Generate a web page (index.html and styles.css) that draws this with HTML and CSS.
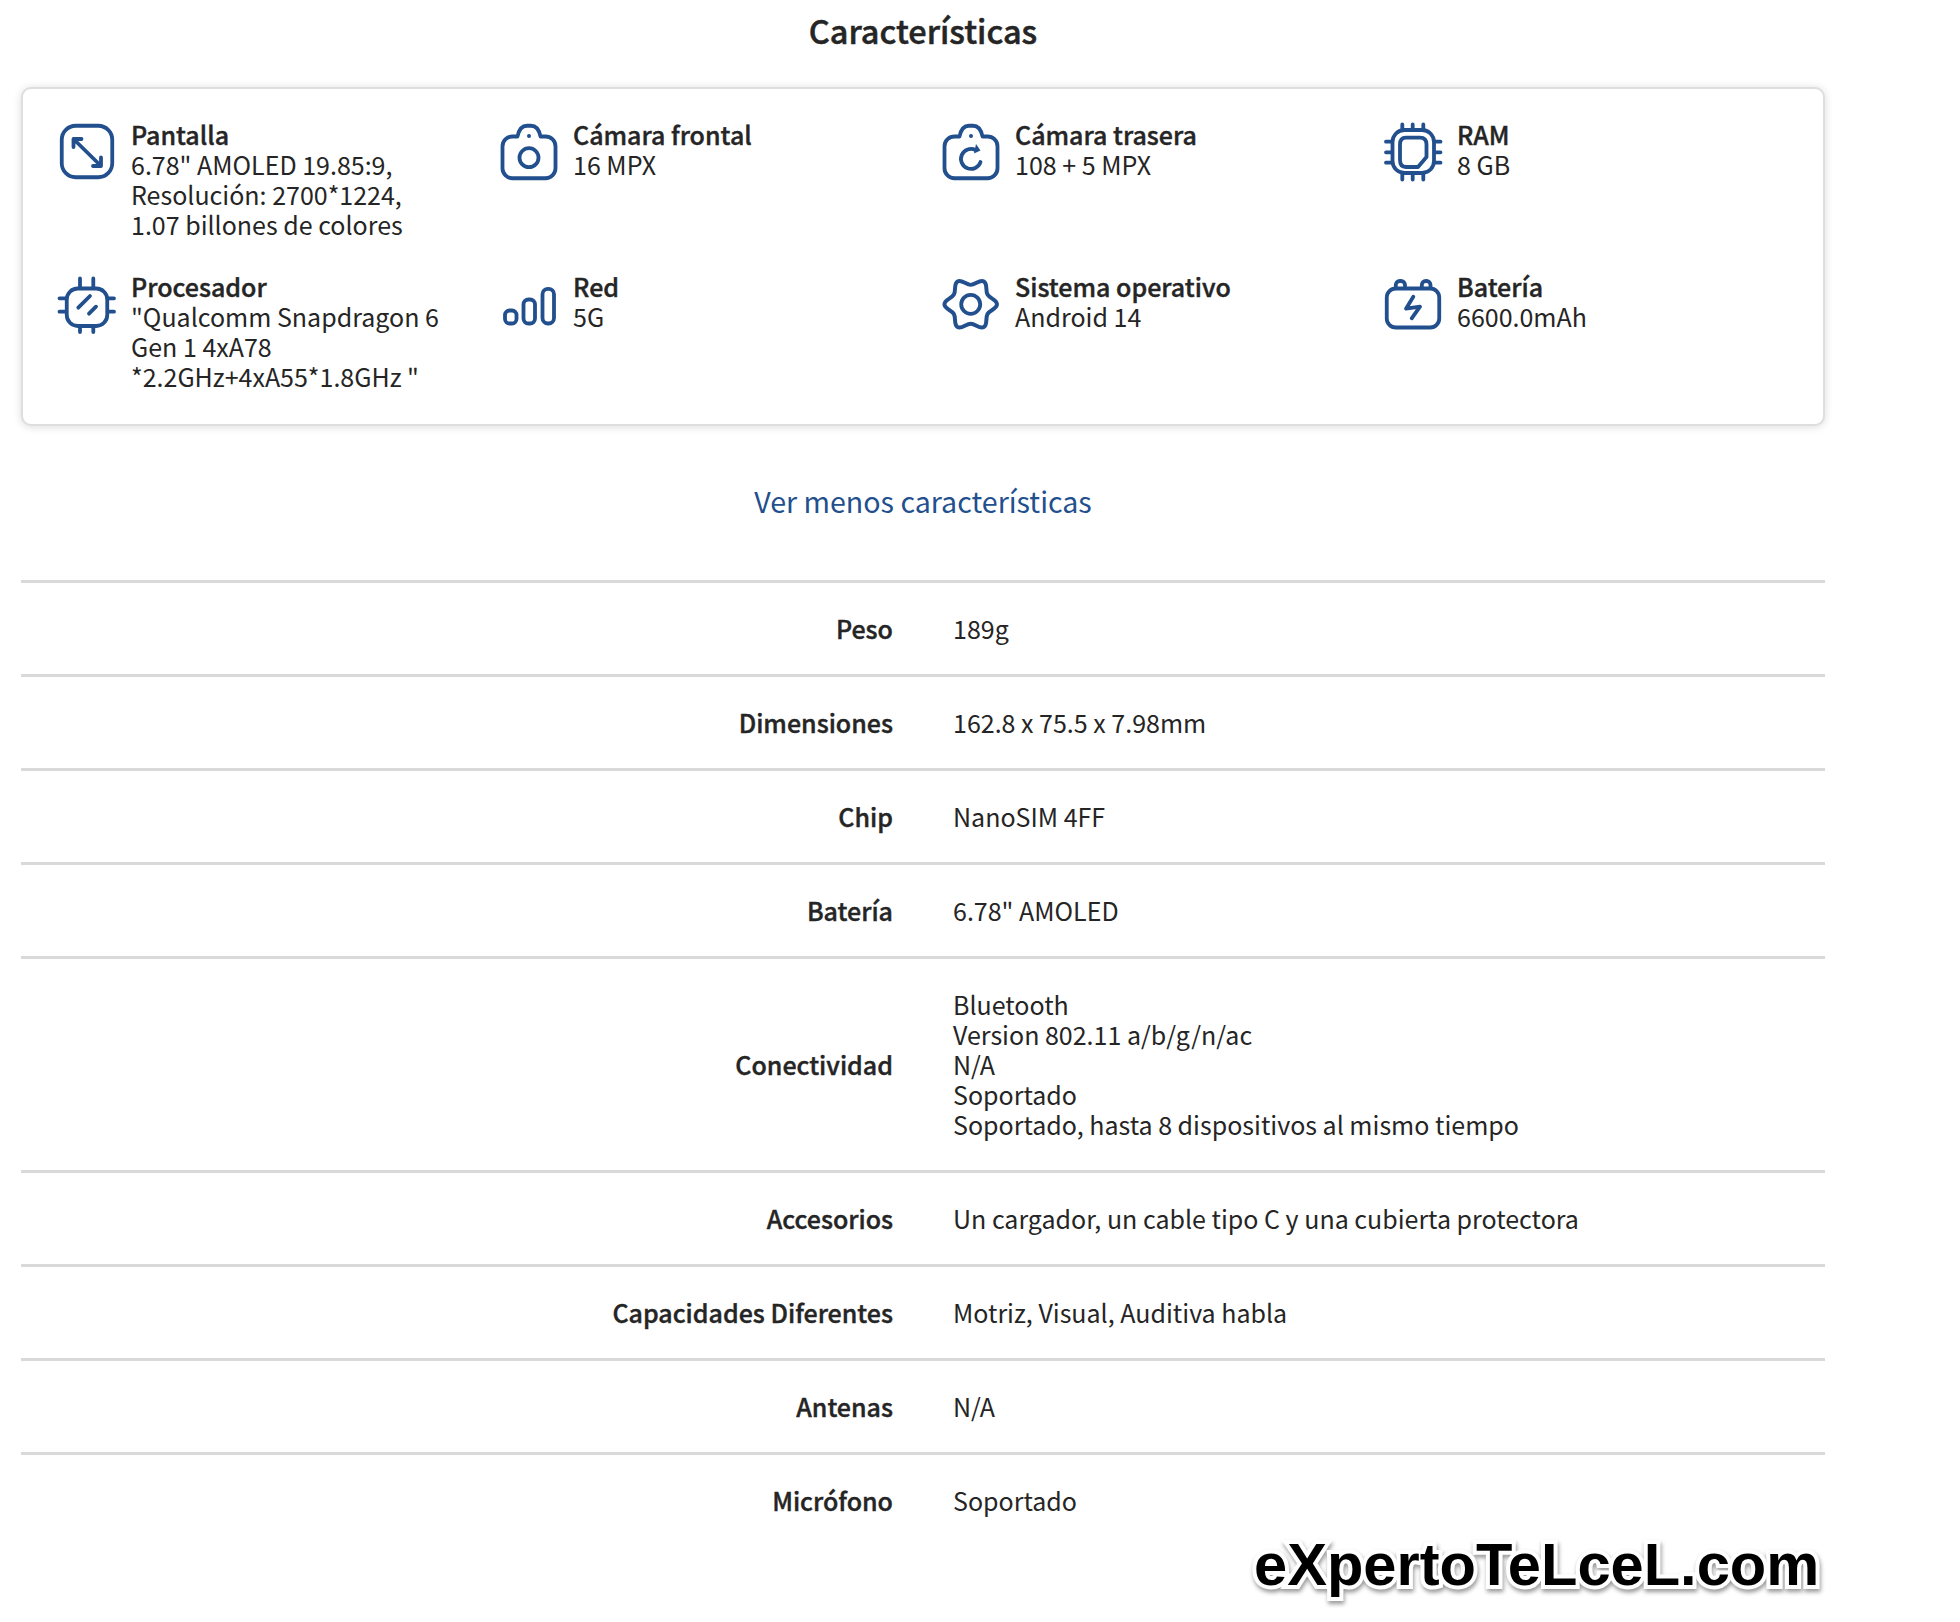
FILE: index.html
```html
<!DOCTYPE html>
<html lang="es">
<head>
<meta charset="utf-8">
<title>Características</title>
<link rel="stylesheet" href="styles.css">
</head>
<body>
<main class="page">
  <h2 class="title">Características</h2>
  <section class="card">
    <div class="feature">
      <svg class="icon" viewBox="0 0 60 60"><rect x="4.75" y="3.75" width="50.5" height="51.5" rx="14"/><path d="M16.500 17 44 44M16.500 25V17H24.500M44 35.500V44H36"/></svg>
      <div class="text"><b>Pantalla</b><span>6.78" AMOLED 19.85:9,<br>Resolución: 2700*1224,<br>1.07 billones de colores</span></div>
    </div>
    <div class="feature">
      <svg class="icon" viewBox="0 0 60 60"><path d="M18.5 14.5C20 7 24 3.75 28 3.75H32C36 3.75 40 7 41.5 14.5H46A10 10 0 0 1 56.5 24.5V46A10 10 0 0 1 46 56.25H14A10 10 0 0 1 3.5 46V24.5A10 10 0 0 1 14 14.5Z"/><circle cx="30" cy="35.7" r="9.5"/><circle class="solid" cx="30" cy="14" r="2"/></svg>
      <div class="text"><b>Cámara frontal</b><span>16 MPX</span></div>
    </div>
    <div class="feature">
      <svg class="icon" viewBox="0 0 60 60"><path d="M18.5 14.5C20 7 24 3.75 28 3.75H32C36 3.75 40 7 41.5 14.5H46A10 10 0 0 1 56.5 24.5V46A10 10 0 0 1 46 56.25H14A10 10 0 0 1 3.5 46V24.5A10 10 0 0 1 14 14.5Z"/><path d="M39.5 40A10 10 0 1 1 34.5 28"/><path class="solid" d="M35 22 39.5 28.5 33 31.5Z"/><circle class="solid" cx="30" cy="14" r="2"/></svg>
      <div class="text"><b>Cámara trasera</b><span>108 + 5 MPX</span></div>
    </div>
    <div class="feature">
      <svg class="icon" viewBox="0 0 60 60"><rect x="9.500" y="8" width="41.500" height="43" rx="12"/><path d="M23 15.700H37Q43.500 15.700 43.500 22.500V35L35 45H23Q17 45 17 38V22.500Q17 15.700 23 15.700Z"/><path d="M19.300 2.500V8M29.700 2.500V8M40.300 2.500V8M19.300 52V57.500M29.700 52V57.500M40.300 52V57.500M3 19.700H9M3 30.300H9M3 40.700H9M52 19.700H57.500M52 30.300H57.500M52 40.700H57.500"/></svg>
      <div class="text"><b>RAM</b><span>8 GB</span></div>
    </div>
    <div class="feature">
      <svg class="icon" viewBox="0 0 60 60"><rect x="9.75" y="14.5" width="40.5" height="37.500" rx="11"/><path d="M23 4.500V13M36.300 4.500V13M23 53V58M36.300 53V58M2.500 24.300H9M2.500 37.700H9M51 24.300H57M51 37.700H57M21.300 33.700 33 22M32 39.700 39 32.700"/></svg>
      <div class="text"><b>Procesador</b><span>"Qualcomm Snapdragon 6<br>Gen 1 4xA78<br>*2.2GHz+4xA55*1.8GHz "</span></div>
    </div>
    <div class="feature">
      <svg class="icon" viewBox="0 0 60 60"><rect x="6" y="36.500" width="11.500" height="13" rx="4.500"/><rect x="24.500" y="25.500" width="11.500" height="24" rx="5"/><rect x="43.500" y="14.800" width="11.500" height="34.700" rx="5.500"/></svg>
      <div class="text"><b>Red</b><span>5G</span></div>
    </div>
    <div class="feature">
      <svg class="icon" viewBox="0 0 60 60"><path transform="translate(29.700 30.300) scale(1.050)" d="M25 0C25 4.500 18.270 5.350 16.020 9.250C13.770 13.150 16.400 19.400 12.500 21.650C8.600 23.900 4.500 18.500 0 18.500C-4.500 18.500 -8.600 23.900 -12.500 21.650C-16.400 19.400 -13.770 13.150 -16.020 9.250C-18.270 5.350 -25 4.500 -25 0C-25 -4.500 -18.270 -5.350 -16.020 -9.250C-13.770 -13.150 -16.400 -19.400 -12.500 -21.650C-8.600 -23.900 -4.500 -18.500 0 -18.500C4.500 -18.500 8.600 -23.900 12.500 -21.650C16.400 -19.400 13.770 -13.150 16.020 -9.250C18.270 -5.350 25 -4.500 25 0Z"/><circle cx="29.700" cy="30.300" r="9.500"/></svg>
      <div class="text"><b>Sistema operativo</b><span>Android 14</span></div>
    </div>
    <div class="feature">
      <svg class="icon" viewBox="0 0 60 60"><rect x="3.750" y="14.500" width="52.500" height="39" rx="9"/><path d="M12.800 14V11A4 4 0 0 1 16.800 7H18A4 4 0 0 1 22 11V14M38.800 14V11A4 4 0 0 1 42.800 7H43.500A4 4 0 0 1 47.500 11V14M30.300 22.700 23 34.700 37 32.700 28.700 44.300"/></svg>
      <div class="text"><b>Batería</b><span>6600.0mAh</span></div>
    </div>
  </section>
  <a class="more" href="#">Ver menos características</a>
  <section class="specs">
    <div class="spec"><div class="label">Peso</div><div class="value">189g</div></div>
    <div class="spec"><div class="label">Dimensiones</div><div class="value">162.8 x 75.5 x 7.98mm</div></div>
    <div class="spec"><div class="label">Chip</div><div class="value">NanoSIM 4FF</div></div>
    <div class="spec"><div class="label">Batería</div><div class="value">6.78" AMOLED</div></div>
    <div class="spec"><div class="label">Conectividad</div><div class="value">Bluetooth<br>Version 802.11 a/b/g/n/ac<br>N/A<br>Soportado<br>Soportado, hasta 8 dispositivos al mismo tiempo</div></div>
    <div class="spec"><div class="label">Accesorios</div><div class="value">Un cargador, un cable tipo C y una cubierta protectora</div></div>
    <div class="spec"><div class="label">Capacidades Diferentes</div><div class="value">Motriz, Visual, Auditiva habla</div></div>
    <div class="spec"><div class="label">Antenas</div><div class="value">N/A</div></div>
    <div class="spec"><div class="label">Micrófono</div><div class="value">Soportado</div></div>
  </section>
</main>
<div class="watermark">eXpertoTeLceL.com</div>
</body>
</html>
```
FILE: styles.css
```css
html, body {
  margin: 0;
  padding: 0;
  background: #fff;
}
body {
  position: relative;
  height: 1622px;
  overflow: hidden;
  font-family: "Noto Sans CJK SC", "Noto Sans", sans-serif;
  font-size: 25px;
  line-height: 30px;
  color: #252525;
}
.page {
  width: 1804px;
  margin-left: 21px;
}
.title {
  margin: 0;
  padding-top: 10px;
  height: 87px;
  box-sizing: border-box;
  text-align: center;
  font-size: 32.500px;
  line-height: 40px;
  font-weight: 500;
  -webkit-text-stroke: .5px #252525;
}
.card {
  box-sizing: border-box;
  height: 339px;
  padding: 30px 34px 31px;
  display: grid;
  grid-template-columns: repeat(4, 442px);
  grid-template-rows: 120px 120px;
  row-gap: 32px;
  background: #fff;
  border: 2px solid #dedede;
  border-radius: 10px;
  box-shadow: 0 1px 8px rgba(0, 0, 0, .14);
}
.feature {
  display: flex;
  column-gap: 14px;
}
.icon {
  flex: none;
  width: 60px;
  height: 60px;
  margin-top: 2.500px;
  fill: none;
  stroke: #224f8d;
  stroke-width: 3.800;
  stroke-linecap: round;
  stroke-linejoin: round;
}
.icon .solid {
  fill: #224f8d;
  stroke: none;
}
.text b, .text span {
  display: block;
}
.text {
  width: 340px;
}
.text b, .label {
  font-weight: 500;
  -webkit-text-stroke: .4px #252525;
}
.more {
  display: block;
  margin-top: 55px;
  height: 99px;
  text-align: center;
  font-size: 28.600px;
  line-height: 40px;
  color: #224f8d;
  text-decoration: none;
}
.spec {
  display: grid;
  grid-template-columns: 872px 1fr;
  column-gap: 60px;
  align-items: center;
  box-sizing: border-box;
  padding: 30px 0 31px;
  border-top: 3px solid #d9d9d9;
}
.label {
  text-align: right;
}
.watermark {
  position: absolute;
  left: 1254px;
  top: 1528px;
  font-family: "Liberation Sans", Arial, sans-serif;
  font-weight: 700;
  font-size: 59.600px;
  line-height: 74px;
  color: #000;
  -webkit-text-stroke: 8px #fff;
  paint-order: stroke fill;
  filter: drop-shadow(1px 3px 2px rgba(0, 0, 0, .4));
}
```
